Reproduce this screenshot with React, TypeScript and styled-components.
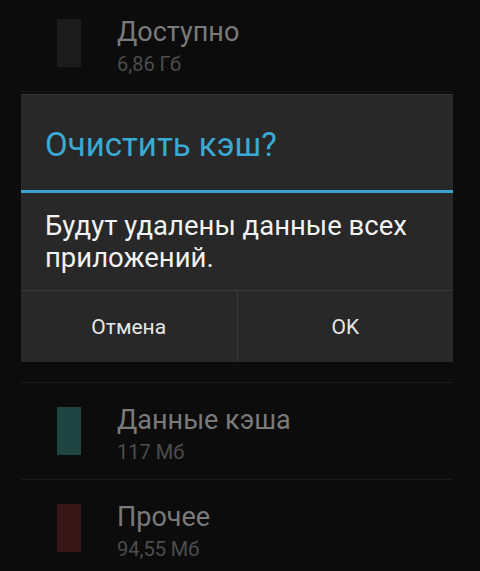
import styled, { createGlobalStyle } from 'styled-components';

const GlobalStyle = createGlobalStyle`
  html, body {
    margin: 0;
    padding: 0;
    background: #0c0c0c;
  }
  body {
    font-family: Roboto, "Noto Sans", "DejaVu Sans", sans-serif;
    -webkit-font-smoothing: antialiased;
  }
`;

const Screen = styled.div`
  position: relative;
  width: 480px;
  height: 571px;
  overflow: hidden;
  background: #0c0c0c;
`;

const StorageList = styled.ul`
  list-style: none;
  margin: -6px 27px 0 21px;
  padding: 0;
`;

const StorageRow = styled.li`
  display: flex;
  align-items: center;
  height: 96px;
  border-top: 1px solid #1a1a1a;
`;

const Swatch = styled.span<{ $color: string }>`
  flex: none;
  width: 24px;
  height: 48px;
  margin-left: 36px;
  background: ${(p) => p.$color};
`;

const RowText = styled.div`
  align-self: flex-start;
  display: flex;
  flex-direction: column;
  margin-left: 36px;
  padding-top: 21px;
`;

const RowTitle = styled.span`
  font-size: 27px;
  line-height: 32px;
  color: #7a7a7a;
`;

const RowValue = styled.span`
  font-size: 20px;
  line-height: 33px;
  color: #4d4d4d;
`;

const Dialog = styled.div`
  position: absolute;
  top: 94px;
  left: 21px;
  width: 432px;
  background: #282828;
  box-shadow: inset 0 1px 0 #323232;
  display: flex;
  flex-direction: column;
`;

const DialogHeader = styled.div`
  height: 92px;
  display: flex;
  align-items: center;
  padding: 4px 24px 0;
  border-bottom: 3px solid #3aa5cf;
`;

const DialogTitle = styled.h2`
  margin: 0;
  font-weight: 400;
  font-size: 33px;
  color: #3aa9d3;
`;

const DialogBody = styled.p`
  margin: 0;
  padding: 17px 24px 16px;
  font-size: 27.5px;
  line-height: 32px;
  color: #f2f2f2;
`;

const ButtonBar = styled.div`
  display: flex;
  height: 71px;
  border-top: 1px solid #3a3a3a;
`;

const DialogButton = styled.button`
  flex: 1;
  border: none;
  background: transparent;
  font-family: inherit;
  font-size: 21px;
  color: #e6e6e6;
  padding: 0;
  cursor: pointer;

  & + & {
    border-left: 1px solid #3a3a3a;
  }
`;

type StorageItem = { id: string; name?: string; size?: string; color: string };

// rows 2-5 sit under the dialog, only their dividers and swatches are kept
const storage: StorageItem[] = [
  { id: 'free', name: 'Доступно', size: '6,86 Гб', color: '#1c1c1c' },
  { id: 'apps', color: '#1a2a3a' },
  { id: 'media', color: '#2a3a1a' },
  { id: 'audio', color: '#3a2a1a' },
  { id: 'cache', name: 'Данные кэша', size: '117 Мб', color: '#1e4544' },
  { id: 'misc', name: 'Прочее', size: '94,55 Мб', color: '#3a1516' },
];

export default function App() {
  return (
    <Screen>
      <GlobalStyle />
      <StorageList>
        {storage.map((item) => (
          <StorageRow key={item.id}>
            <Swatch $color={item.color} />
            {item.name && (
              <RowText>
                <RowTitle>{item.name}</RowTitle>
                <RowValue>{item.size}</RowValue>
              </RowText>
            )}
          </StorageRow>
        ))}
      </StorageList>

      <Dialog role="dialog">
        <DialogHeader>
          <DialogTitle>Очистить кэш?</DialogTitle>
        </DialogHeader>
        <DialogBody>Будут удалены данные всех приложений.</DialogBody>
        <ButtonBar>
          <DialogButton>Отмена</DialogButton>
          <DialogButton>OK</DialogButton>
        </ButtonBar>
      </Dialog>
    </Screen>
  );
}
